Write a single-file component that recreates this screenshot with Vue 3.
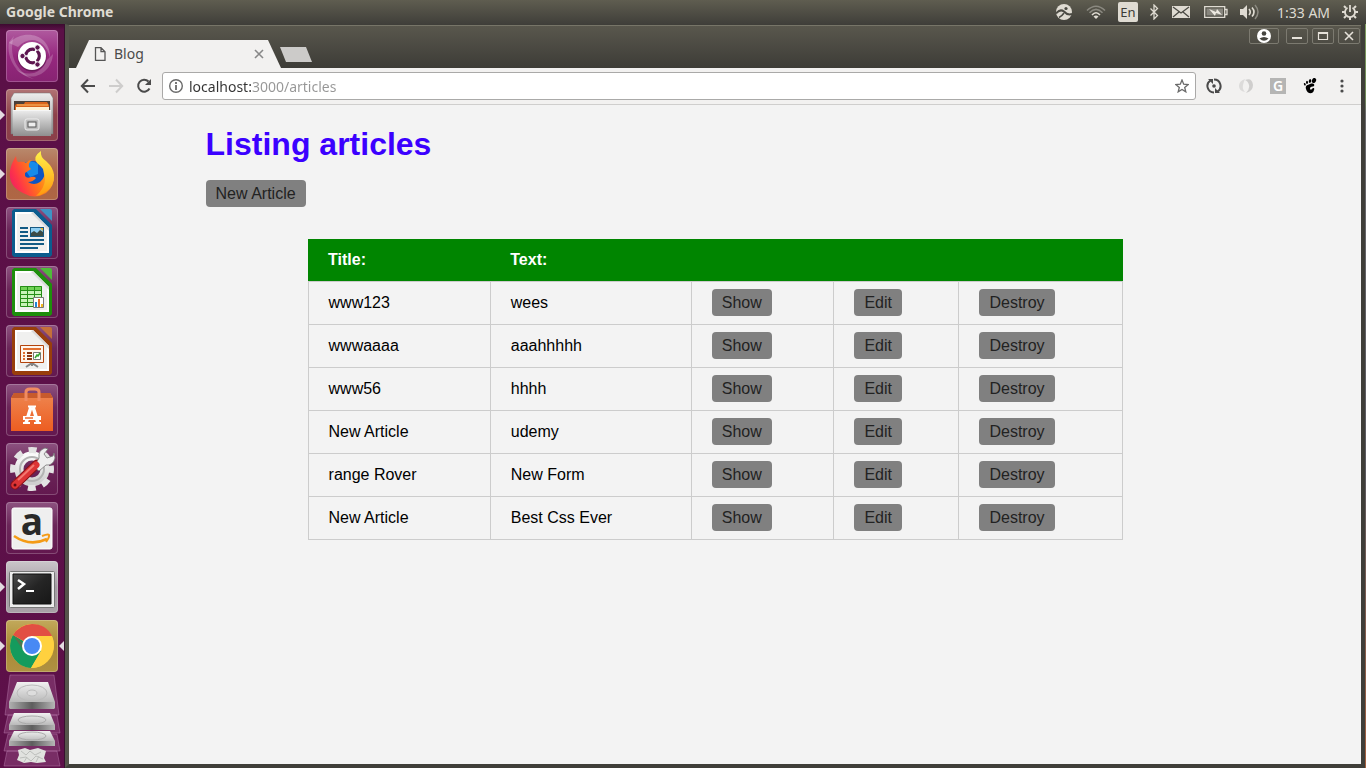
<script setup>
import { ref } from 'vue'

const address = ref('localhost:3000/articles')

const articles = [
  { id: 1, title: 'www123', text: 'wees' },
  { id: 2, title: 'wwwaaaa', text: 'aaahhhhh' },
  { id: 3, title: 'www56', text: 'hhhh' },
  { id: 4, title: 'New Article', text: 'udemy' },
  { id: 5, title: 'range Rover', text: 'New Form' },
  { id: 6, title: 'New Article', text: 'Best Css Ever' }
]

const documents = [
  { name: 'Writer', kind: 'writer', color: '#0b5c8e', fold: '#3f93c4' },
  { name: 'Calc', kind: 'calc', color: '#1e8e0c', fold: '#4fbb3a' },
  { name: 'Impress', kind: 'impress', color: '#983e0c', fold: '#c4703a' }
]
</script>

<template>
  <div class="desktop">
    <header class="panel">
      <span class="panel-title">Google Chrome</span>
      <div class="indicators">
        <button type="button" aria-label="Pictures">
          <svg width="18" height="18" viewBox="0 0 18 18">
            <circle cx="8" cy="9" r="8" fill="#dfdbd2" />
            <path d="M0 10.500Q4 5.500 8 8.500q3.500 4 8 2.500" fill="none" stroke="#4b4a43" stroke-width="2" />
            <path d="M3 14.500q3-1.500 5-4.500" fill="none" stroke="#4b4a43" stroke-width="1.500" />
            <circle cx="10" cy="5.500" r="1.600" fill="#4b4a43" />
          </svg>
        </button>
        <button type="button" aria-label="Network">
          <svg width="20" height="16" viewBox="0 0 20 16" fill="none" stroke-width="1.6">
            <path d="M1 6.500Q10-2 19 6.500" stroke="#8b8980" />
            <path d="M3.500 8.800Q10 2 16.500 8.800" stroke="#8b8980" />
            <path d="M6 11Q10 6.500 14 11" stroke="#dfdbd2" />
            <path d="M7.500 12.500Q10 10.500 12.500 12.500L10 15z" fill="#dfdbd2" />
          </svg>
        </button>
        <button type="button" class="keyboard">En</button>
        <button type="button" aria-label="Bluetooth">
          <svg width="10" height="16" viewBox="0 0 10 16"><path d="M.5 4.500l7 7L4 15V1l3.500 3.500-7 7" fill="none" stroke="#dfdbd2" stroke-width="1.300" /></svg>
        </button>
        <button type="button" aria-label="Mail">
          <svg width="20" height="14" viewBox="0 0 20 14"><path d="M0 1h18v12H0z" fill="#dfdbd2" /><path d="M1 2l8 6 8-6M1 12l6-5M17 12l-6-5" fill="none" stroke="#4b4a43" stroke-width="1.300" /></svg>
        </button>
        <button type="button" aria-label="Battery">
          <svg width="24" height="14" viewBox="0 0 24 14"><path d="M.7 1.700h20v10.600h-20zM21 4.500h2v5h-2" fill="none" stroke="#dfdbd2" stroke-width="1.300" /><path d="M2.500 3.500h16.500v7H2.500z" fill="#88867e" /><path d="M5 4l7 3 1-3 5 6-6-2-1 3z" fill="#eeeae2" /></svg>
        </button>
        <button type="button" aria-label="Volume">
          <svg width="25" height="16" viewBox="0 0 25 16"><path d="M0 5h3l4-4v14l-4-4H0z" fill="#dfdbd2" /><path d="M9 5q2.500 3 0 6M12 3.500q4 4.500 0 9" fill="none" stroke="#dfdbd2" stroke-width="1.600" /><path d="M15 1q6 7 0 14" fill="none" stroke="#8b8980" stroke-width="1.500" /></svg>
        </button>
        <button type="button" class="clock">1:33 AM</button>
        <button type="button" aria-label="Session">
          <svg width="16" height="16" viewBox="0 0 16 16" fill="none" stroke="#dfdbd2">
            <path d="M5.500 3.800a5 5 0 1 0 5 0M8 1v7" stroke-width="1.800" />
            <path d="M2 2l2 2M14 2l-2 2M0 8h3M16 8h-3M2 14l2-2M14 14l-2-2M8 13v3" stroke-width="2" />
          </svg>
        </button>
      </div>
    </header>

    <div class="workspace">
      <nav class="launcher" aria-label="Launcher">
        <div class="tiles">
          <button type="button" class="tile dash" aria-label="Search your computer">
            <svg viewBox="0 0 52 52">
              <path d="M3 13C20-3 45 6 44 28 40 10 24 4 12 17z" fill="#fff" fill-opacity=".24" />
              <path d="M47 24C46 43 24 56 9 38c12 10 27 6 32-8z" fill="#fff" fill-opacity=".2" />
              <path d="M8 6C2 24 10 42 28 49 12 46 0 30 3 12z" fill="#fff" fill-opacity=".2" />
              <circle cx="26" cy="27" r="14.500" fill="#45103b" fill-opacity=".5" />
              <circle cx="26" cy="26" r="14" fill="#fff" />
              <circle cx="26.500" cy="26" r="6.800" fill="none" stroke="#5d1550" stroke-width="3.200" />
              <path d="M26.500 26H15M26.500 26l6-10M26.500 26l6 10" stroke="#fff" stroke-width="1.500" />
              <circle cx="26.500" cy="26" r="4.800" fill="#fff" />
              <g fill="#5d1550" stroke="#fff"><circle cx="16.500" cy="26" r="2.700" /><circle cx="31.500" cy="17.500" r="2.700" /><circle cx="31.500" cy="34.500" r="2.700" /></g>
            </svg>
          </button>
          <button type="button" class="tile files running" aria-label="Files">
            <svg viewBox="0 0 52 52">
              <defs><linearGradient id="cabinet" x2="0" y2="1"><stop stop-color="#ededed" /><stop offset="1" stop-color="#8f8f8f" /></linearGradient></defs>
              <path d="M8 4h36l3 5v36h-3V21H8v24H5V9z" fill="url(#cabinet)" stroke="#777" stroke-width=".5" />
              <path d="M8 12h36v10H8z" fill="#4b4039" />
              <path d="M9 17l1-2h8l1-2h22l2 3v5H9z" fill="#d9641b" />
              <path d="M10 18h33v3H10z" fill="#fff0cf" /><path d="M11 16h31" stroke="#ffc06b" />
              <path d="M7 21h38v26H7z" fill="url(#cabinet)" />
              <path d="M7 21.500h38" stroke="#f6f6f6" />
              <rect x="19" y="30" width="14" height="11" rx="2" fill="#bdbdbd" stroke="#eee" />
              <rect x="22" y="33" width="8" height="5" fill="#eee" stroke="#555" />
            </svg>
          </button>
          <button type="button" class="tile firefox running" aria-label="Firefox">
            <svg viewBox="0 0 52 52">
              <defs>
                <linearGradient id="foxbody" x1="1" x2="0" y1=".3" y2=".7"><stop stop-color="#ffc22e" /><stop offset=".45" stop-color="#ff7a16" /><stop offset=".8" stop-color="#ff3647" /><stop offset="1" stop-color="#ee1f62" /></linearGradient>
                <linearGradient id="foxtail" x2="0" y2="1"><stop stop-color="#fff24a" /><stop offset="1" stop-color="#ff980e" /></linearGradient>
              </defs>
              <circle cx="26" cy="27" r="14" fill="#0b55c4" />
              <path d="M16 17q8-7 16-1v10l-8 3z" fill="#168bea" />
              <path d="M10 8q0 4 2 6 5-1 8 1 2-3 6-3-4 3-3 7l2 2-6 4v3q2 3 6 1 3-1 5 1-3 4-8 4 6 4 12 0 6-5 5-13l9 5q1 12-8 19-11 7-23 0Q2 38 4 23q1-7 6-15z" fill="url(#foxbody)" />
              <path d="M35 3q-1 6 5 10 8 7 8 15 0 11-10 17-4 3-8 3 9-8 9-17l-2-10q-2-3-6-6-5-6 4-12z" fill="url(#foxtail)" />
            </svg>
          </button>
          <button v-for="doc in documents" :key="doc.kind" type="button" class="tile" :aria-label="doc.name">
            <svg viewBox="0 0 52 52">
              <path d="M8 2h22l16 16v30l-2 2H8l-2-2V4z" :fill="doc.color" />
              <path d="M34 2h10q2 0 2 2v10z" :fill="doc.fold" />
              <path d="M9 5h18l16 16v25H9z" fill="#fff" /><path d="M11 7h15l15 15v22H11z" fill="#f0f0ef" />
              <path d="M27 5l16 16v3L25 6z" fill="#dadada" />
              <g v-if="doc.kind === 'writer'">
                <path d="M14 21h8M14 25h8M14 29h8M14 33h24M14 37h24M14 41h18" stroke="#125a84" stroke-width="2" />
                <path d="M24 20h14v10H24z" fill="#185a83" /><path d="M25 21h12v8H25z" fill="#8fcff2" />
                <path d="M25 29v-3l3-2 3 2 3-3 3 2v4z" fill="#3d4b45" /><path d="M34 21h3v3z" fill="#e9b632" />
              </g>
              <g v-else-if="doc.kind === 'calc'">
                <path d="M14 20h22v21H14z" fill="#c9f3b9" /><path d="M14 20h22v4H14z" fill="#71d355" />
                <path d="M14.500 20.500h21v20h-21zM14 24.500h22M14 28.500h22M14 32.500h22M14 36.500h22M21.500 20v21M28.500 20v21" fill="none" stroke="#268e17" />
                <path d="M27.500 31.500h10v10h-10z" fill="#fff" stroke="#777" />
                <path d="M29 36h2v5h-2z" fill="#2286d6" /><path d="M32 33h2v8h-2z" fill="#e76d24" /><path d="M35 38h2v3h-2z" fill="#f2b920" />
              </g>
              <g v-else>
                <path d="M20 42l6-4 6 4M26 37v4" fill="none" stroke="#858585" stroke-width="2" />
                <path d="M14.500 20.500h23v17h-23z" fill="#fff5ec" stroke="#b3440d" />
                <path d="M17 24h18" stroke="#e27030" stroke-width="2" />
                <path d="M17 28h2m-2 3h2m-2 3h2" stroke="#df6c2e" stroke-width="2" /><path d="M21 28h5m-5 3h5m-5 3h5" stroke="#8c3611" stroke-width="2" />
                <path d="M27.500 27.500h7v7h-7z" fill="#fff" stroke="#777" /><path d="M29 33l2-3 1 1 2-3" fill="none" stroke="#36a432" stroke-width="1.500" />
              </g>
            </svg>
          </button>
          <button type="button" class="tile" aria-label="Ubuntu Software">
            <svg viewBox="0 0 52 52">
              <defs><linearGradient id="bag" x2="0" y2="1"><stop stop-color="#ee8650" /><stop offset="1" stop-color="#ed5d21" /></linearGradient></defs>
              <path d="M8 9h36l3 5v33H5V14z" fill="url(#bag)" /><path d="M8 9h36l3 5H5z" fill="#c75a2c" />
              <path d="M20 17V8q0-3 4-3h5q4 0 4 3v9" fill="none" stroke="#f08b62" stroke-width="3" />
              <path d="M25 23l-5 16M27 23l5 16" stroke="#fff" stroke-width="3.500" /><path d="M22 22.500h8" stroke="#fff" stroke-width="2" />
              <path d="M17 34h18" stroke="#fff" stroke-width="4" /><path d="M19 34h8" stroke="#ec6b31" stroke-width="1.500" /><path d="M17 39h7M28 39h7" stroke="#fff" stroke-width="2" />
            </svg>
          </button>
          <button type="button" class="tile" aria-label="System Settings">
            <svg viewBox="0 0 52 52">
              <defs><linearGradient id="gear" x2="0" y2="1"><stop stop-color="#fafafa" /><stop offset="1" stop-color="#cfcfcf" /></linearGradient></defs>
              <circle cx="26" cy="26" r="13" fill="none" stroke="url(#gear)" stroke-width="9" />
              <circle cx="26" cy="26" r="19" fill="none" stroke="#e3e3e3" stroke-width="6" stroke-dasharray="8 6.920" stroke-dashoffset="4" />
              <circle cx="26" cy="26" r="12" fill="none" stroke="#b3b3b3" stroke-width="2" />
              <path d="M9 42l22-21" stroke="#8a1016" stroke-width="9" stroke-linecap="round" />
              <path d="M28 24l5-9q-1-8 6-10l3 1-4 5 3 4 6-2 1-3 1 5q-2 8-9 7l-7 6z" fill="#eee" stroke="#777" stroke-width=".8" />
              <path d="M9 42l21-20" stroke="#dc3435" stroke-width="7" stroke-linecap="round" /><path d="M12 37l16-15" stroke="#f37970" stroke-width="2" />
              <circle cx="9" cy="42" r="1.500" fill="#5c0b10" />
            </svg>
          </button>
          <button type="button" class="tile" aria-label="Amazon">
            <svg viewBox="0 0 52 52">
              <rect x="6" y="6" width="40" height="41" rx="2" fill="#efefef" stroke="#fff" />
              <text x="26" y="33" class="amazon-letter" text-anchor="middle">a</text>
              <path d="M8 34q16 11 33 3" fill="none" stroke="#f49b16" stroke-width="2.500" /><path d="M36 34q8-3 7 0 0 2-3 6" fill="none" stroke="#f49b16" stroke-width="2" />
            </svg>
          </button>
          <button type="button" class="tile terminal running" aria-label="Terminal">
            <svg viewBox="0 0 52 52">
              <defs><linearGradient id="screen" x2="1" y2="1"><stop stop-color="#4c4c4c" /><stop offset=".5" stop-color="#252525" /><stop offset="1" stop-color="#171717" /></linearGradient></defs>
              <rect x="3.500" y="10.500" width="45" height="36" rx="1" fill="#ededed" stroke="#777" />
              <path d="M7 13h38v30H7z" fill="url(#screen)" stroke="#101010" />
              <path d="M12 19l6 4-6 5" fill="none" stroke="#fff" stroke-width="2.500" /><path d="M20 30h8" stroke="#fff" stroke-width="2" />
            </svg>
          </button>
          <button type="button" class="tile chrome running focused" aria-label="Google Chrome">
            <svg viewBox="0 0 52 52">
              <circle cx="26" cy="26" r="22" fill="#ffd13f" />
              <path d="M26 26L7 15a22 22 0 0 0 18 33l10-17z" fill="#149b5d" />
              <path d="M26 26L7 15Q13 5 26 4q14 0 20 12H26l-9 5z" fill="#e24f43" />
              <path d="M26 16h20q4 9 0 17-6 15-21 15l10-17z" fill="#ffd13f" />
              <path d="M17 30L7 15l10 8z" fill="#a93e36" fill-opacity=".4" />
              <circle cx="26" cy="26" r="10" fill="#fff" /><circle cx="26" cy="26" r="8" fill="#4889f4" />
            </svg>
          </button>
        </div>
        <button type="button" class="drives" aria-label="Drives and Trash">
          <svg width="64" height="96" viewBox="0 -2 64 96">
            <defs><linearGradient id="drivetop" x2="0" y2="1"><stop stop-color="#f1f1f1" /><stop offset="1" stop-color="#b9b9b9" /></linearGradient><linearGradient id="drivefront"><stop stop-color="#b0b0b0" /><stop offset=".5" stop-color="#5d5d5d" /><stop offset="1" stop-color="#b5b5b5" /></linearGradient></defs>
            <g fill="#cf8cc1" fill-opacity=".24" stroke="#c48aba" stroke-opacity=".4">
              <path d="M10 1h44l5 40H5z" /><path d="M8 41h49l3 18H4z" /><path d="M8 60h49l3 17H4z" /><path d="M7 77h50l3 15H4z" />
            </g>
            <path d="M17 8h31l7 20H9z" fill="url(#drivetop)" /><path d="M9 28h46v6l-1 1H10l-1-1z" fill="url(#drivefront)" />
            <ellipse cx="32" cy="19" rx="15" ry="8" fill="none" stroke="#bbb" /><ellipse cx="32" cy="19" rx="5" ry="3" fill="#ddd" stroke="#bbb" />
            <path d="M14 39h36l5 12H9z" fill="url(#drivetop)" /><path d="M9 51h46v5H9z" fill="url(#drivefront)" /><ellipse cx="32" cy="46" rx="14" ry="4" fill="none" stroke="#aaa" />
            <path d="M14 57h36l5 10H9z" fill="url(#drivetop)" /><path d="M9 67h46v5H9z" fill="url(#drivefront)" /><ellipse cx="32" cy="62" rx="14" ry="4" fill="none" stroke="#aaa" />
            <path d="M18 76l7-2 5 2 8-2 8 3-2 7 2 4-9 1-6-1-7 1-7-3 2-5z" fill="#e1e2df" />
            <path d="M21 77l5 4 4-4 5 4 6-3M20 84l6-1 5 4 5-5 7 3M24 88l3-5M36 88l3-6" fill="none" stroke="#bdbfbc" />
          </svg>
        </button>
      </nav>

      <div class="window">
        <div class="titlebar">
          <div class="tab">
            <svg width="12" height="14" viewBox="0 0 12 14"><path d="M1.500.700h5.500l4 4v8.600H1.500zM7 .700v4h4" fill="none" stroke="#555" stroke-width="1.300" /></svg>
            <span class="tab-title">Blog</span>
            <button type="button" aria-label="Close tab"><svg width="10" height="10" viewBox="0 0 10 10"><path d="M1 1l8 8M9 1L1 9" stroke="#888" stroke-width="1.600" /></svg></button>
          </div>
          <button type="button" class="new-tab" aria-label="New tab"></button>
          <div class="window-controls">
            <button type="button" class="profile" aria-label="Profile"><svg width="14" height="14" viewBox="0 0 14 14"><circle cx="7" cy="7" r="7" fill="#fff" /><circle cx="7" cy="4.500" r="2.300" fill="#46453f" /><path d="M2.500 9.500q4.500-3 9 0-4.500 4.500-9 0z" fill="#46453f" /></svg></button>
            <button type="button" aria-label="Minimize"><svg width="12" height="12" viewBox="0 0 12 12"><path d="M1 8h10" stroke="#e6e2da" stroke-width="2" /></svg></button>
            <button type="button" aria-label="Maximize"><svg width="12" height="12" viewBox="0 0 12 12"><path d="M1.500 2.500h9v7h-9zM1 3.300h10" fill="none" stroke="#e6e2da" stroke-width="1.200" /></svg></button>
            <button type="button" aria-label="Close"><svg width="12" height="12" viewBox="0 0 12 12"><path d="M2 2l8 8M10 2l-8 8" stroke="#e6e2da" stroke-width="1.600" /></svg></button>
          </div>
        </div>

        <div class="toolbar">
          <button type="button" aria-label="Back"><svg width="16" height="16" viewBox="0 0 16 16"><path d="M15 8H2M8 1.500L1.800 8 8 14.500" fill="none" stroke="#4b4b4b" stroke-width="2" /></svg></button>
          <button type="button" aria-label="Forward"><svg width="16" height="16" viewBox="0 0 16 16"><path d="M1 8h13M8 1.500L14.200 8 8 14.500" fill="none" stroke="#cecdcc" stroke-width="2" /></svg></button>
          <button type="button" aria-label="Reload"><svg width="16" height="16" viewBox="0 0 16 16"><path d="M13.500 10.500a6 6 0 1 1-1-7" fill="none" stroke="#4b4b4b" stroke-width="2" /><path d="M15 1v6H9z" fill="#4b4b4b" /></svg></button>
          <div class="omnibox">
            <button type="button" aria-label="Site information"><svg width="14" height="14" viewBox="0 0 14 14"><circle cx="7" cy="7" r="6.300" fill="none" stroke="#6a6a6a" stroke-width="1.400" /><path d="M7 3v2M7 6v5" stroke="#6a6a6a" stroke-width="1.800" /></svg></button>
            <input v-model="address" type="text" aria-label="Address" spellcheck="false" />
            <button type="button" aria-label="Bookmark"><svg width="14" height="14" viewBox="0 0 14 14"><path d="M7 1l1.700 4.200 4.500.3-3.500 2.900 1.100 4.400L7 10.400l-3.800 2.400 1.100-4.400L.8 5.500l4.500-.3z" fill="none" stroke="#6a6a6a" stroke-width="1.300" /></svg></button>
          </div>
          <div class="extensions">
            <button type="button" aria-label="Sync"><svg width="16" height="16" viewBox="0 0 16 16"><path d="M8 14.500A6.500 6.500 0 0 1 4.500 2.500M8 1.500a6.500 6.500 0 0 1 3.500 12" fill="none" stroke="#4a4a4a" stroke-width="2" /><path d="M2 1h5v5zM14 15H9v-5z" fill="#4a4a4a" /><circle cx="8" cy="8" r="1.800" fill="#4a4a4a" /></svg></button>
            <button type="button" aria-label="Downloader"><svg width="16" height="16" viewBox="0 0 16 16"><path d="M7 1Q1 3 1 8q0 5 6 6-3-3-2-7 1-4 2-6z" fill="#dcdbda" /><path d="M7 2q7-3 8 5 0 6-7 8 4-4 3-8-1-4-4-5z" fill="#cfcecd" /></svg></button>
            <button type="button" class="grammar">G</button>
            <button type="button" aria-label="GNOME Shell integration"><svg width="14" height="16" viewBox="0 0 14 16" fill="#000"><ellipse cx="11" cy="2.500" rx="2" ry="2.600" transform="rotate(28 11 2.500)" /><ellipse cx="7" cy="3" rx="1.200" ry="1.900" transform="rotate(16 7 3)" /><ellipse cx="4" cy="4.300" rx="1" ry="1.600" /><ellipse cx="1.800" cy="6.300" rx=".9" ry="1.400" transform="rotate(-20 1.800 6.300)" /><path d="M7 6c3-1 5 0 4 2-1 1-3 0-4 2 0 2 1 2 2 1 1-2 3-1 2 1-1 5-7 4-8-1C2 8 4 7 7 6z" /></svg></button>
            <button type="button" aria-label="Menu"><svg width="16" height="16" viewBox="0 0 16 16" fill="#4b4b4b"><circle cx="8" cy="3" r="1.600" /><circle cx="8" cy="8" r="1.600" /><circle cx="8" cy="13" r="1.600" /></svg></button>
          </div>
        </div>

        <main class="page">
          <div class="content">
            <h1>Listing articles</h1>
            <a href="#new" class="btn">New Article</a>
            <table>
              <thead>
                <tr><th>Title:</th><th>Text:</th><th></th><th></th><th></th></tr>
              </thead>
              <tbody>
                <tr v-for="article in articles" :key="article.id">
                  <td>{{ article.title }}</td>
                  <td>{{ article.text }}</td>
                  <td><a :href="`#show-${article.id}`" class="btn">Show</a></td>
                  <td><a :href="`#edit-${article.id}`" class="btn">Edit</a></td>
                  <td><a :href="`#destroy-${article.id}`" class="btn">Destroy</a></td>
                </tr>
              </tbody>
            </table>
          </div>
        </main>
      </div>
    </div>
  </div>
</template>

<style>
html, body { margin: 0; }
</style>

<style scoped>
* { box-sizing: border-box; }
button { border: 0; padding: 0; margin: 0; background: none; color: inherit; font: inherit; display: flex; align-items: center; }
svg { display: block; flex: none; }

.desktop {
  height: 100vh;
  min-height: 480px;
  display: flex;
  flex-direction: column;
  overflow: hidden;
  background: #5b1047;
  font-family: "Noto Sans", "Open Sans", sans-serif;
}
.panel {
  height: 24px;
  flex: none;
  display: flex;
  align-items: center;
  justify-content: space-between;
  padding: 0 8px 0 6px;
  color: #dfdbd2;
  background: linear-gradient(#5f5d50, #403f3a);
}
.panel-title { font-size: 14px; font-weight: 700; line-height: 20px; }
.indicators { display: flex; align-items: center; gap: 12px; }
.keyboard {
  width: 20px;
  height: 20px;
  justify-content: center;
  border-radius: 2px;
  background: #dfdbd2;
  color: #3c3b37;
  font-size: 13px;
}
.clock { width: 53px; font-size: 14px; white-space: nowrap; }

.workspace {
  flex: 1;
  min-height: 0;
  display: flex;
  padding-right: 1px;
  background: linear-gradient(#7d9c5f, #6f8a58 10%, #6b6a6c 12%, #5c5a60 60%, #a5603f);
}
.launcher {
  width: 65px;
  flex: none;
  overflow: hidden;
  border-right: 1px solid #37102e;
  background: linear-gradient(#3d0a30, #5b1047 6px, #5d1049);
}
.tiles { display: flex; flex-direction: column; gap: 7px; padding: 6px 6px 0; }
.tile {
  position: relative;
  width: 52px;
  height: 52px;
  border-radius: 4px;
  background: linear-gradient(#8d5280, #6b2659 45%, #63184f);
  box-shadow: inset 0 0 0 1px rgba(255, 255, 255, 0.22);
}
.tile svg { width: 52px; height: 52px; }
.dash { background: linear-gradient(#b05a9f, #96287f 50%, #872372); }
.files { background: linear-gradient(#b17475, #8e414a 50%, #8b3f49); }
.firefox { background: linear-gradient(#b9896c, #ad6345 50%, #af6744); }
.terminal { background: linear-gradient(#cbc6ca, #a39ba2 50%, #a8a1a7); }
.chrome { background: linear-gradient(#c2a95b, #aa8a35 50%, #af9142); }
.running::before,
.focused::after {
  content: "";
  position: absolute;
  top: 21px;
  border: 5px solid transparent;
}
.running::before { left: -6px; border-left-color: #e3dbe1; border-right: 0; }
.focused::after { right: -6px; border-right-color: #e3dbe1; border-left: 0; }
.amazon-letter { font: 700 37px "Open Sans", sans-serif; fill: #292929; }

.window {
  flex: 1;
  min-width: 0;
  display: flex;
  flex-direction: column;
  border: solid #3f3e39;
  border-width: 1px 4px 4px;
  border-left-color: #55544b;
  background: #f3f3f3;
}
.titlebar {
  height: 43px;
  flex: none;
  display: flex;
  align-items: flex-end;
  padding-left: 7px;
  border-top: 1px solid #777568;
  background: linear-gradient(#59574d, #3d3c37);
}
.tab {
  width: 205px;
  height: 28px;
  display: flex;
  align-items: center;
  gap: 8px;
  padding: 0 17px 0 18px;
  color: #4b4b4b;
  background: #f2f1f0;
  clip-path: polygon(13px 0, 192px 0, 205px 100%, 0 100%);
}
.tab-title { flex: 1; font-size: 14px; line-height: 20px; }
.new-tab {
  width: 32px;
  height: 15px;
  align-self: center;
  margin-top: 15px;
  margin-left: -1px;
  background: #cccbc9;
  clip-path: polygon(0 0, 26px 0, 32px 100%, 6px 100%);
}
.window-controls { display: flex; align-self: flex-start; gap: 4px; margin: 2px 1px 0 auto; }
.window-controls button {
  width: 22px;
  height: 16px;
  justify-content: center;
  border: 1px solid #7c7a70;
  border-radius: 2px;
}
.window-controls .profile { width: 30px; margin-right: 3px; }

.toolbar {
  height: 37px;
  flex: none;
  display: flex;
  align-items: center;
  gap: 12px;
  padding: 0 11px;
  border-bottom: 1px solid #cfcecd;
  background: #f2f1f0;
}
.omnibox {
  flex: 1;
  height: 28px;
  display: flex;
  align-items: center;
  gap: 6px;
  padding: 0 6px;
  margin-left: -2px;
  border: 1px solid #aaa9a8;
  border-radius: 3px;
  background: #fff;
}
.omnibox input {
  flex: 1;
  min-width: 0;
  padding: 0;
  border: 0;
  outline: 0;
  font: 14px "Noto Sans", sans-serif;
  color: transparent;
  background: linear-gradient(90deg, #333 63px, #969696 63px);
  background-clip: text;
  -webkit-background-clip: text;
}
.extensions { display: flex; align-items: center; gap: 16px; margin-left: -2px; }
.extensions button { width: 16px; justify-content: center; }
.extensions .grammar { height: 16px; background: #b5b5b4; color: #fff; font-size: 14px; font-weight: 600; line-height: 16px; }

.page {
  flex: 1;
  min-height: 0;
  overflow: auto;
  padding-left: 1px;
  background: #f3f3f3;
  color: #000;
  font: 16px "Liberation Sans", Arial, sans-serif;
}
.content { width: 79%; margin: 0 auto; }
h1 { margin: 21px 0 22px; font-size: 32px; line-height: 37px; color: #3b00ff; }
.btn {
  padding: 5px 10px;
  border-radius: 4px;
  background: #808080;
  color: #222;
  text-decoration: none;
}
table { width: 80%; margin: 36px auto; border-collapse: collapse; }
thead { background: #008500; color: #fff; }
th, td { padding: 12px 20px; text-align: left; }
td { border: 1px solid #ccc; }
</style>
